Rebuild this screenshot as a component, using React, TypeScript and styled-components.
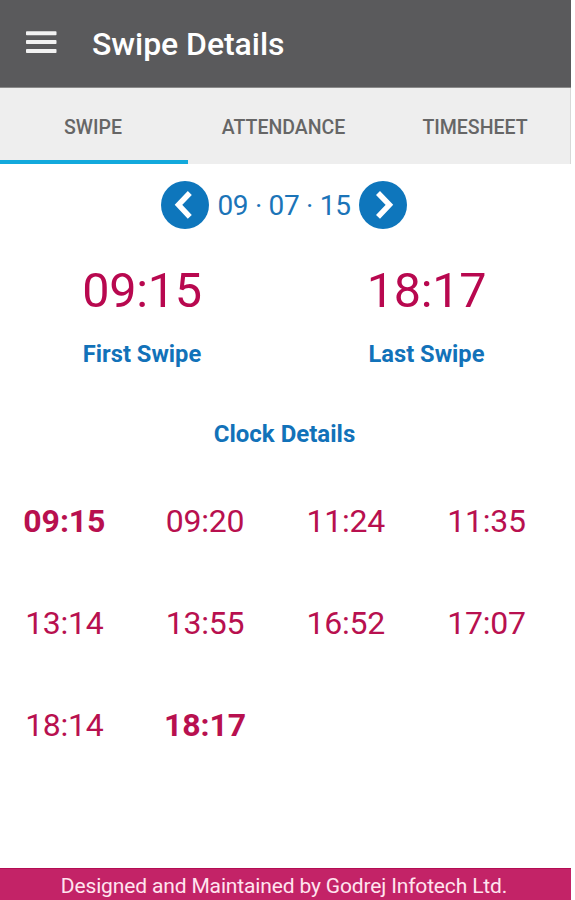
import React from 'react';
import styled, { createGlobalStyle } from 'styled-components';

const GlobalStyle = createGlobalStyle`
  * { box-sizing: border-box; }
  body { margin: 0; background: #fff; font-family: Roboto, sans-serif; }
`;

const Screen = styled.div`
  width: 571px;
  height: 900px;
  display: flex;
  flex-direction: column;
  background: #fff;
  overflow: hidden;
`;

const Header = styled.header`
  height: 88px;
  flex: none;
  display: flex;
  align-items: center;
  padding: 0 0 2px 26px;
  background: #5a5a5c;
  border-bottom: 1px solid #8a8a8a;
`;

const MenuButton = styled.button`
  width: 31px;
  height: 24px;
  padding: 0;
  border: 0;
  background: none;
  margin-right: 35px;
  svg { display: block; }
`;

const Title = styled.h1`
  margin: 3px 0 0;
  font-size: 32px;
  line-height: 38px;
  font-weight: 500;
  letter-spacing: -0.05px;
  color: #fff;
  white-space: nowrap;
`;

const Tabs = styled.nav`
  height: 76px;
  flex: none;
  display: grid;
  grid-template-columns: 188px 193px 190px;
  background: #eee;
  border-right: 1px solid #d8d8d8;
`;

const Tab = styled.button<{ $active?: boolean }>`
  border: 0;
  border-bottom: 4px solid ${(p) => (p.$active ? '#12a9dc' : 'transparent')};
  padding: 8px 2px 0 0;
  background: none;
  color: #666;
  font: 500 19.5px/22px Roboto, sans-serif;
  letter-spacing: -0.02px;
`;

const DateRow = styled.div`
  height: 82px;
  flex: none;
  display: flex;
  align-items: center;
  padding-left: 161px;
`;

const RoundButton = styled.button`
  width: 48px;
  height: 48px;
  padding: 0;
  border: 0;
  border-radius: 50%;
  background: #0e76bc;
  svg { display: block; }
`;

const DateText = styled.span`
  width: 150px;
  padding-top: 2px;
  text-align: center;
  font-size: 28px;
  letter-spacing: -0.3px;
  line-height: 34px;
  color: #1b74b8;
  white-space: nowrap;
`;

const Summary = styled.section`
  display: grid;
  grid-template-columns: 284px 285px;
  padding-top: 16px;
  height: 172px;
  flex: none;
`;

const SummaryItem = styled.div`
  display: flex;
  flex-direction: column;
  align-items: center;
`;

const BigTime = styled.div`
  font-size: 48.5px;
  letter-spacing: -0.3px;
  line-height: 58px;
  color: #b8084f;
`;

const Label = styled.div`
  margin-top: 19px;
  font-size: 23.7px;
  line-height: 30px;
  font-weight: 700;
  color: #1272b9;
  white-space: nowrap;
`;

const SectionTitle = styled.h2`
  margin: 0;
  width: 569px;
  flex: none;
  text-align: center;
  font-size: 24px;
  line-height: 32px;
  font-weight: 700;
  color: #1272b9;
`;

const Times = styled.div`
  display: grid;
  grid-template-columns: repeat(4, 140.7px);
  grid-auto-rows: 102px;
  margin: 20px 0 0 -6px;
`;

const Time = styled.div<{ $strong?: boolean }>`
  display: flex;
  align-items: center;
  justify-content: center;
  font-size: 32px;
  letter-spacing: ${(p) => (p.$strong ? '-0.1px' : '-0.25px')};
  font-weight: ${(p) => (p.$strong ? 700 : 400)};
  color: #b8104f;
`;

const Footer = styled.footer`
  margin-top: auto;
  height: 32px;
  flex: none;
  padding: 4px 3px 0 0;
  text-align: center;
  font-size: 21px;
  letter-spacing: -0.15px;
  line-height: 26px;
  color: #ffe4ef;
  background: #c32367;
  border-top: 1px solid #b40d53;
  white-space: nowrap;
`;

const swipes = ['09:15', '09:20', '11:24', '11:35', '13:14', '13:55', '16:52', '17:07', '18:14', '18:17'];

const Chevron = ({ d }: { d: string }) => (
  <svg width="48" height="48" viewBox="0 0 48 48" fill="none" stroke="#fff" strokeWidth="5.5">
    <path d={d} />
  </svg>
);

export default function App() {
  return (
    <>
      <GlobalStyle />
      <Screen>
        <Header>
          <MenuButton aria-label="Menu">
            <svg width="31" height="24" viewBox="0 0 31 24" fill="#f2f2f2">
              <rect y="0.2" width="30.5" height="4" rx="0.8" />
              <rect y="9.1" width="30.5" height="4" rx="0.8" />
              <rect y="18" width="30.5" height="4" rx="0.8" />
            </svg>
          </MenuButton>
          <Title>Swipe Details</Title>
        </Header>
        <Tabs>
          <Tab $active>SWIPE</Tab>
          <Tab>ATTENDANCE</Tab>
          <Tab>TIMESHEET</Tab>
        </Tabs>
        <DateRow>
          <RoundButton aria-label="Previous day"><Chevron d="M28.8 12 L17.5 23.8 L28.8 35.8" /></RoundButton>
          <DateText>09 · 07 · 15</DateText>
          <RoundButton aria-label="Next day"><Chevron d="M19 12 L30.4 23.8 L19 35.8" /></RoundButton>
        </DateRow>
        <Summary>
          <SummaryItem>
            <BigTime>09:15</BigTime>
            <Label>First Swipe</Label>
          </SummaryItem>
          <SummaryItem>
            <BigTime>18:17</BigTime>
            <Label>Last Swipe</Label>
          </SummaryItem>
        </Summary>
        <SectionTitle>Clock Details</SectionTitle>
        <Times>
          {swipes.map((t, i) => (
            <Time key={t} $strong={i === 0 || i === swipes.length - 1}>{t}</Time>
          ))}
        </Times>
        <Footer>Designed and Maintained by Godrej Infotech Ltd.</Footer>
      </Screen>
    </>
  );
}
